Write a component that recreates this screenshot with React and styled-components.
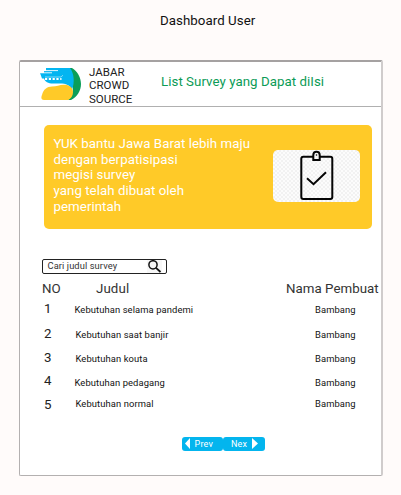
import React from "react";
import styled, { createGlobalStyle } from "styled-components";

const Global = createGlobalStyle`
  * { box-sizing: border-box; }
  body { margin: 0; background: #fffbfa; font-family: Roboto, "Liberation Sans", sans-serif; }
`;

const Page = styled.div`
  width: 401px;
  height: 495px;
  overflow: hidden;
  padding: 12px 0 0 19px;
`;

const PageTitle = styled.h1`
  margin: 0 0 31px 141px;
  font-size: 13.3px;
  line-height: 17px;
  font-weight: 400;
  letter-spacing: 0.05px;
  color: #111;
`;

const Card = styled.main`
  width: 364px;
  height: 416px;
  background: #fff;
  border: 1px solid #b3b0b0;
  border-top: 2px solid #a5a1a1;
  border-right: 2px solid #d0cccc;
  border-radius: 2px;
`;

const Header = styled.header`
  display: flex;
  height: 45px;
  padding-left: 20px;
  border-bottom: 1px solid #b0b0b0;
`;

const Logo = styled.svg`
  width: 42px;
  height: 32px;
  margin-top: 6px;
`;

const Brand = styled.div`
  width: 50px;
  margin: 4px 0 0 7px;
  font-size: 11.5px;
  line-height: 13.4px;
  color: #222;
`;

const HeaderTitle = styled.h2`
  margin: 11px 0 0 22px;
  font-size: 13.3px;
  line-height: 17px;
  font-weight: 400;
  letter-spacing: 0.04px;
  color: #0b9b56;
`;

const Banner = styled.section`
  display: flex;
  justify-content: space-between;
  width: 328px;
  height: 104px;
  margin: 18px 0 0 24px;
  padding: 11px 12px 0 9.5px;
  border-radius: 5px;
  background: #ffca28;
`;

const BannerText = styled.p`
  margin: 0;
  font-size: 13.3px;
  line-height: 15.65px;
  letter-spacing: 0.04px;
  white-space: pre;
  color: #fff;
`;

const Picture = styled.div`
  display: flex;
  justify-content: center;
  width: 87px;
  height: 52px;
  margin-top: 14px;
  border-radius: 5px;
  background: repeating-conic-gradient(#f2f2f2 0 25%, #fcfcfc 0 50%) 0 0 / 4px 4px;
`;

const Search = styled.div`
  display: flex;
  justify-content: space-between;
  width: 125px;
  height: 15px;
  margin: 30px 0 0 22px;
  padding: 0 4px 0 4.5px;
  border: 1px solid #222;
  border-radius: 2px;
  font-size: 9.3px;
  line-height: 12px;
  letter-spacing: 0.1px;
  color: #333;
`;

const SearchIcon = styled.svg`
  width: 15px;
  height: 13px;
  background: #f7f7f7;
`;

const Row = styled.div`
  display: grid;
  grid-template-columns: 33px 240px 60px;
  height: ${(p) => p.$height || 24}px;
  padding-left: 22px;
`;

const HeadRow = styled(Row)`
  grid-template-columns: 54px 190px 100px;
  height: 25px;
  padding-top: 6px;
  font-size: 13.3px;
  line-height: 17px;
  color: #333;
  white-space: nowrap;
`;

const HeadCell = styled.div`
  letter-spacing: ${(p) => p.$spacing || 0}px;
`;

const Number = styled.div`
  padding: ${(p) => p.$top}px 0 0 2px;
  font-size: 13.3px;
  line-height: 16px;
  color: #222;
`;

const Cell = styled.div`
  padding: 5px 0 0 ${(p) => p.$indent || 0}px;
  font-size: 9.4px;
  line-height: 12px;
  letter-spacing: 0.1px;
  color: #111;
  white-space: nowrap;
`;

const Title = styled(Cell)`
  margin-left: -0.5px;
`;

const Pager = styled.nav`
  display: flex;
  margin: 20px 0 0 162px;
`;

const PageButton = styled.button`
  display: flex;
  align-items: center;
  gap: ${(p) => p.$gap}px;
  width: ${(p) => p.$width}px;
  height: 14px;
  padding: 0 0 1px ${(p) => p.$inset}px;
  border: 0;
  border-radius: 3px;
  background: #03b5ee;
  color: #fff;
  font: 400 9px/12px Roboto, sans-serif;
  letter-spacing: 0.2px;
`;

const Arrow = styled.svg`
  width: 6px;
  height: 11px;
  flex: none;
  fill: #fff;
`;

const surveys = [
  { title: "Kebutuhan selama pandemi", height: 25, top: 2.2, indent: 0 },
  { title: "Kebutuhan saat banjir", height: 24, top: 1.5, indent: 1 },
  { title: "Kebutuhan kouta", height: 24, top: 1.5, indent: 1 },
  { title: "Kebutuhan pedagang", height: 21, top: 1.3, indent: 0 },
  { title: "Kebutuhan normal", height: 24, top: 4.2, indent: 1 },
];

export default function App() {
  return (
    <Page>
      <Global />
      <PageTitle>Dashboard User</PageTitle>
      <Card>
        <Header>
          <Logo viewBox="0 0 42 32">
            <path d="M29 0H32C37 3 41 9 41 16S37 29 31 32H28C32 28 33 24 33 20Z" fill="#0b9e58" />
            <path d="M6 0H30C34 5 35 14 32 22C30 17 26 15.5 20 15.5H13C8 15.5 5 14 4 10.5H2L0 5H4V3H6Z" fill="#03b5f1" />
            <path d="M4 2.6H18M0 4.8H12" stroke="#fff" strokeWidth=".9" />
            <path d="M5 9H21L23 7.2" fill="none" stroke="#fff" strokeWidth=".5" />
            <path d="M5 11H21.5" stroke="#fff" strokeWidth="2" strokeDasharray="2.2 1.6" />
            <path d="M12 18.6C17 18.6 20 16.4 25 16.8C30 17.2 33 20 33 24C33 28 31 30.5 28 32H4C1 32 1 29 2 27C3.5 21.5 7 18.6 12 18.6Z" fill="#ffca28" />
          </Logo>
          <Brand>JABAR CROWD SOURCE</Brand>
          <HeaderTitle>List Survey yang Dapat diIsi</HeaderTitle>
        </Header>
        <Banner>
          <BannerText>{"YUK bantu Jawa Barat lebih maju\ndengan berpatisipasi\nmegisi survey\nyang telah dibuat oleh\npemerintah"}</BannerText>
          <Picture>
            <svg width="34" height="52" viewBox="0 0 34 52" fill="none" stroke="#050505">
              <rect x="1.3" y="6.8" width="31" height="42.3" rx="2" strokeWidth="2" />
              <path d="M13.3 10V5C13.3 .6 19.7 .6 19.7 5V10Z" fill="#f7f7f7" strokeWidth="2" />
              <circle cx="16.5" cy="5" r=".8" fill="#050505" stroke="none" />
              <path d="M7 28.3L13.5 34.2L26 22.3" strokeWidth="2" />
            </svg>
          </Picture>
        </Banner>
        <Search>
          <span>Cari judul survey</span>
          <SearchIcon viewBox="0 0 15 13" fill="none" stroke="#111">
            <circle cx="6" cy="4.8" r="4.1" strokeWidth="1.5" />
            <path d="M9 7.8L13.5 12" strokeWidth="1.8" />
          </SearchIcon>
        </Search>
        <HeadRow>
          <HeadCell>NO</HeadCell>
          <HeadCell $spacing={0.1}>Judul</HeadCell>
          <HeadCell $spacing={0.03}>Nama Pembuat</HeadCell>
        </HeadRow>
        {surveys.map((s, i) => (
          <Row key={s.title} $height={s.height}>
            <Number $top={s.top}>{i + 1}</Number>
            <Title $indent={s.indent}>{s.title}</Title>
            <Cell>Bambang</Cell>
          </Row>
        ))}
        <Pager>
          <PageButton $width={41} $inset={3} $gap={3.5}>
            <Arrow viewBox="0 0 6 11"><path d="M0 5.5L5 0V11Z" /></Arrow>
            Prev
          </PageButton>
          <PageButton $width={42} $inset={8} $gap={5}>
            Nex
            <Arrow viewBox="0 0 6 11"><path d="M6 5.5L0 0V11Z" /></Arrow>
          </PageButton>
        </Pager>
      </Card>
    </Page>
  );
}
